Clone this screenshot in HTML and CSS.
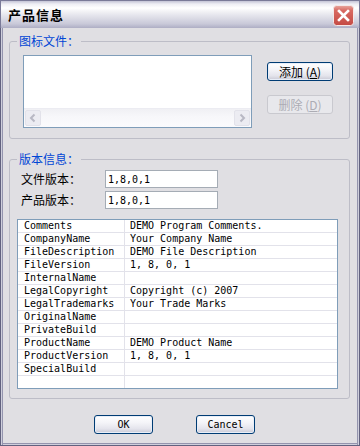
FILE: index.html
```html
<!DOCTYPE html>
<html lang="zh">
<head>
<meta charset="utf-8">
<title>产品信息</title>
<link rel="stylesheet" href="styles.css">
</head>
<body>
<div class="window">
  <div class="titlebar">
    <span class="title">产品信息</span>
    <span class="close">
      <svg width="21" height="21" viewBox="0 0 21 21">
        <defs>
          <linearGradient id="cg" x1="0" y1="0" x2="0" y2="1">
            <stop offset="0" stop-color="#e8a8a0"/>
            <stop offset="0.25" stop-color="#d86a62"/>
            <stop offset="1" stop-color="#c44a44"/>
          </linearGradient>
        </defs>
        <rect x="0.5" y="0.5" width="20" height="20" rx="3" fill="url(#cg)" stroke="#f4e8e8"/>
        <path d="M6 6 L15 15 M15 6 L6 15" stroke="#ffffff" stroke-width="2.6" stroke-linecap="square"/>
      </svg>
    </span>
  </div>
  <div class="body">
    <fieldset class="group icons">
      <legend>图标文件：</legend>
      <div class="icon-row">
        <div class="listbox">
          <div class="listbox-items"></div>
          <div class="hscroll">
            <span class="sb-btn">
              <svg width="14" height="14" viewBox="0 0 14 14"><path d="M8.5 3.5 L5 7 L8.5 10.5" fill="none" stroke="#b8b8c4" stroke-width="2"/></svg>
            </span>
            <span class="sb-track"></span>
            <span class="sb-btn">
              <svg width="14" height="14" viewBox="0 0 14 14"><path d="M5.5 3.5 L9 7 L5.5 10.5" fill="none" stroke="#b8b8c4" stroke-width="2"/></svg>
            </span>
          </div>
        </div>
        <div class="side-buttons">
          <button class="btn">添加 (<u>A</u>)</button>
          <button class="btn" disabled>删除 (<u>D</u>)</button>
        </div>
      </div>
    </fieldset>

    <fieldset class="group version">
      <legend>版本信息：</legend>
      <div class="field"><label class="field-label">文件版本：</label><input class="edit" value="1,8,0,1"></div>
      <div class="field"><label class="field-label">产品版本：</label><input class="edit" value="1,8,0,1"></div>
      <div class="listview">
        <div class="lv-row"><span class="k">Comments</span><span class="v">DEMO Program Comments.</span></div>
        <div class="lv-row"><span class="k">CompanyName</span><span class="v">Your Company Name</span></div>
        <div class="lv-row"><span class="k">FileDescription</span><span class="v">DEMO File Description</span></div>
        <div class="lv-row"><span class="k">FileVersion</span><span class="v">1, 8, 0, 1</span></div>
        <div class="lv-row"><span class="k">InternalName</span><span class="v"></span></div>
        <div class="lv-row"><span class="k">LegalCopyright</span><span class="v">Copyright (c) 2007</span></div>
        <div class="lv-row"><span class="k">LegalTrademarks</span><span class="v">Your Trade Marks</span></div>
        <div class="lv-row"><span class="k">OriginalName</span><span class="v"></span></div>
        <div class="lv-row"><span class="k">PrivateBuild</span><span class="v"></span></div>
        <div class="lv-row"><span class="k">ProductName</span><span class="v">DEMO Product Name</span></div>
        <div class="lv-row"><span class="k">ProductVersion</span><span class="v">1, 8, 0, 1</span></div>
        <div class="lv-row"><span class="k">SpecialBuild</span><span class="v"></span></div>
        <div class="lv-row"><span class="k"></span><span class="v"></span></div>
      </div>
    </fieldset>

    <div class="dialog-buttons">
      <button class="btn push">OK</button>
      <button class="btn push">Cancel</button>
    </div>
  </div>
</div>
</body>
</html>
```

FILE: styles.css
```css
* { box-sizing: border-box; }

html, body {
  margin: 0;
  padding: 0;
  background: #e0dfe3;
}

.window {
  width: 360px;
  height: 446px;
  display: flex;
  flex-direction: column;
  font-family: "Noto Sans CJK SC", "Liberation Sans", sans-serif;
  font-size: 12px;
  color: #000;
}

.titlebar {
  height: 28px;
  flex: none;
  display: flex;
  align-items: center;
  justify-content: space-between;
  padding: 0 5px 0 7px;
  border: 1px solid #7a7a98;
  border-bottom: none;
  background: linear-gradient(to bottom,
    #c4c4d6 0px, #eeeef4 3px, #ffffff 7px, #f0f0f4 11px,
    #dcdce6 17px, #c8c8d8 23px, #aeaec4 27px);
}

.title {
  font-weight: bold;
  font-size: 13px;
  line-height: 14px;
  letter-spacing: 1px;
  margin-top: 1px;
}

.close {
  display: flex;
  width: 21px;
  height: 21px;
  margin-top: 2px;
}

.body {
  flex: 1;
  background: #e0dfe3;
  border: 1px solid #62627f;
  border-top: none;
  box-shadow:
    inset 1px 0 0 #cfcfdc, inset 2px 0 0 #9494ae,
    inset -1px 0 0 #cfcfdc, inset -2px 0 0 #9494ae,
    inset 0 -1px 0 #cfcfdc, inset 0 -2px 0 #9494ae;
  padding: 6px 9px 0 8px;
  display: flex;
  flex-direction: column;
}

.group {
  margin: 0;
  border: 1px solid #bdbdc7;
  border-radius: 3px;
  min-width: 0;
}

.group legend {
  font-size: 12px;
  line-height: 14px;
  height: 14px;
  color: #0046d5;
  padding: 0 2px;
}

.icons {
  padding: 7px 0 10px 13px;
}
.icons legend { margin-left: -6px; }

.version {
  margin-top: 13px;
  padding: 4px 0 9px 7px;
}

.icon-row {
  display: flex;
  align-items: flex-start;
}

.listbox {
  width: 229px;
  height: 73px;
  border: 1px solid #7f9db9;
  background: #fff;
  display: flex;
  flex-direction: column;
}

.listbox-items { flex: 1; }

.hscroll {
  height: 19px;
  display: flex;
  align-items: center;
  padding: 0 1px;
  background: linear-gradient(to bottom, #f0f0f4, #f7f7fa 40%, #fbfbfd);
  border-top: 1px solid #ececf2;
}

.sb-btn {
  width: 16px;
  height: 16px;
  display: flex;
  align-items: center;
  justify-content: center;
  border: 1px solid #e2e2ea;
  border-radius: 2px;
  background: #ececf2;
}

.sb-track { flex: 1; }

.side-buttons {
  margin-left: 15px;
  margin-top: 7px;
  display: flex;
  flex-direction: column;
  gap: 14px;
}

.btn {
  width: 66px;
  height: 19px;
  padding: 0;
  border: 1px solid #003c74;
  border-radius: 3px;
  background: linear-gradient(to bottom, #ffffff 0%, #f4f4f8 40%, #e4e4ec 75%, #c8c8d4 100%);
  font-family: "Noto Sans CJK SC", "Liberation Sans", sans-serif;
  font-size: 12px;
  line-height: 15px;
  color: #000;
  box-shadow: inset 0 0 0 1px #e8eef8;
}

.btn u { text-decoration: underline; }

.btn:disabled {
  border-color: #c9c9cf;
  background: #e8e8ec;
  color: #acacb4;
  box-shadow: none;
}

.field {
  display: flex;
  align-items: center;
  height: 18px;
  margin-bottom: 3px;
}

.field-label {
  width: 84px;
  margin-left: 4px;
  font-size: 12px;
  line-height: 14px;
}

.edit {
  width: 113px;
  height: 18px;
  border: 1px solid #a5acb5;
  background: #fff;
  padding: 0 2px;
  margin: 0;
  font-family: "DejaVu Sans Mono", "Liberation Mono", monospace;
  font-size: 10px;
  color: #000;
  outline: none;
}

.listview {
  margin-top: 10px;
  width: 321px;
  height: 170px;
  border: 1px solid #7f9db9;
  background: #fff;
  overflow: hidden;
}

.lv-row {
  display: grid;
  grid-template-columns: 107px 1fr;
  height: 13px;
  border-bottom: 1px solid #e2e2ea;
  font-family: "DejaVu Sans Mono", "Liberation Mono", monospace;
  font-size: 10px;
  line-height: 12px;
  white-space: pre;
}

.lv-row .k {
  padding-left: 6px;
  border-right: 1px solid #e2e2ea;
}

.lv-row .v {
  padding-left: 5px;
}

.dialog-buttons {
  display: flex;
  gap: 43px;
  margin-top: 16px;
  padding-left: 85px;
}

.btn.push {
  width: 59px;
  height: 19px;
  font-family: "DejaVu Sans Mono", "Liberation Mono", monospace;
  font-size: 10px;
}
```
